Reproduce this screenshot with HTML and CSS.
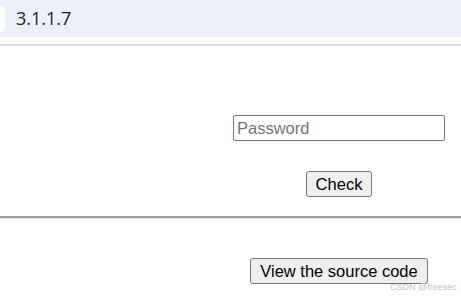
FILE: index.html
```html
<!DOCTYPE html>
<html lang="en">
<head>
  <meta charset="UTF-8" />
  <title>3.1.1.7</title>
  <link rel="stylesheet" href="styles.css">
</head>
<body>
  <div class="tab-bar">
    <span class="tab-dot"></span>
    <span class="tab-title">3.1.1.7</span>
  </div>
  <div class="tab-rule"></div>

  <div class="page">
    <div class="column">
      <form class="login" onsubmit="return false">
        <input type="password" class="pass" placeholder="Password">
        <button class="btn check">Check</button>
      </form>
    </div>
  </div>

  <hr class="split">

  <div class="page">
    <div class="column">
      <button class="btn source">View the source code</button>
    </div>
  </div>

  <div class="mark">CSDN @freesec</div>
</body>
</html>
```

FILE: styles.css
```css
body {
  margin: 0;
  font-family: 'Liberation Sans', Arial, sans-serif;
  background: #ffffff;
  color: #000000;
  overflow: hidden;
}

.tab-bar {
  height: 37px;
  background: #ebf0f9;
  display: flex;
  align-items: center;
}

.tab-dot {
  width: 10px;
  height: 26px;
  margin-left: -5px;
  border-radius: 13px;
  background: #ffffff;
}

.tab-title {
  margin-left: 11px;
  font-family: 'Open Sans', sans-serif;
  font-size: 18px;
  color: #1f1f1f;
  padding-bottom: 2px;
}

.tab-rule {
  height: 2px;
  margin-top: 7px;
  background: #dddddd;
}

.page {
  display: flex;
  justify-content: flex-end;
}

.column {
  width: 244px;
  text-align: center;
}

.login {
  display: flex;
  flex-direction: column;
  align-items: center;
  padding-top: 69px;
}

.pass {
  box-sizing: border-box;
  width: 212px;
  height: 26px;
  padding: 1px 3px;
  border: 1px solid #767676;
  border-radius: 2px;
  font-family: 'Liberation Sans', Arial, sans-serif;
  font-size: 16.5px;
}

.pass::placeholder {
  color: #757575;
}

.btn {
  box-sizing: border-box;
  height: 26px;
  padding: 0 8px;
  background: #efefef;
  border: 1px solid #767676;
  border-radius: 3px;
  font-family: 'Liberation Sans', Arial, sans-serif;
  font-size: 16.5px;
  color: #000000;
}

.check {
  margin-top: 30px;
  width: 66px;
}

.split {
  margin: 19px 0 0;
  border: none;
  border-top: 2px solid #9a9a9a;
  border-bottom: 1px solid #eeeeee;
}

.source {
  margin-top: 39px;
  width: 178px;
}

.mark {
  position: absolute;
  left: 390px;
  top: 282px;
  font-size: 9px;
  color: #c4c4c4;
}
```
